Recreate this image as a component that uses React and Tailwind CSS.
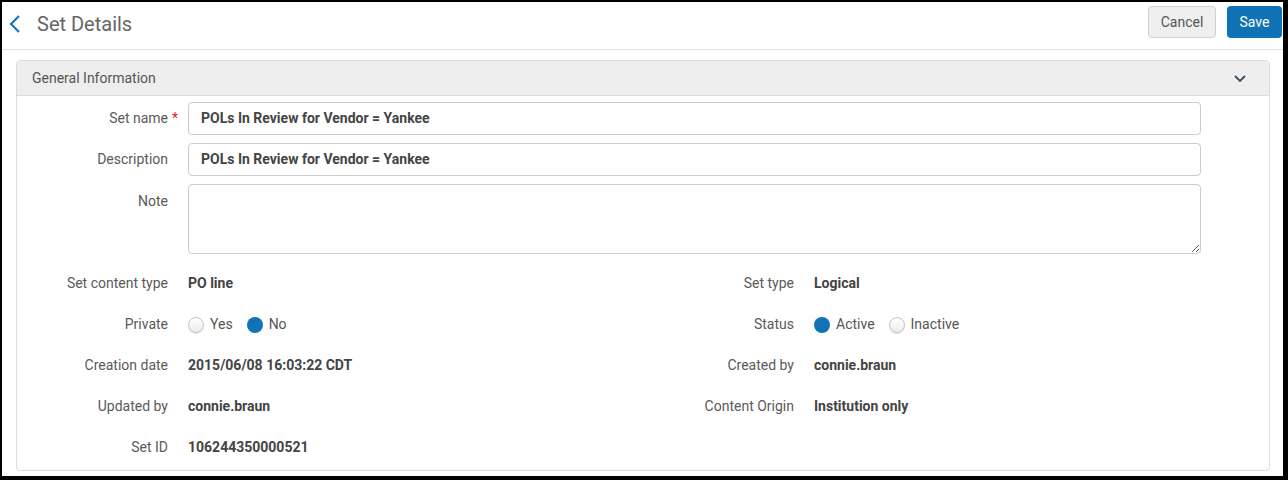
import React from "react";

function Radio({ checked, label }) {
  return (
    <div className="flex items-center">
      {checked ? (
        <span className="w-4 h-4 rounded-full bg-[#1272b6] inline-block" />
      ) : (
        <span className="w-4 h-4 rounded-full border border-[#c4c4c4] bg-gradient-to-b from-[#ffffff] to-[#ececec] shadow-[0_1px_1px_rgba(0,0,0,0.12)] inline-block" />
      )}
      <span className="ml-[6px] text-[14px] font-normal text-[#555]">{label}</span>
    </div>
  );
}

function Field({ label, children }) {
  return (
    <div className="flex items-center h-[41px]">
      <div className="w-[151px] text-right text-[14px] text-[#5a5a5a] shrink-0">{label}</div>
      <div className="ml-[20px] flex items-center gap-[14px] text-[14px] font-bold text-[#444]">{children}</div>
    </div>
  );
}

export default function App() {
  return (
    <div
      className="w-[1288px] h-[480px] bg-black pl-[2px] pt-[2px] pr-[5px] pb-[4px]"
      style={{ fontFamily: "Roboto, 'Liberation Sans', sans-serif" }}
    >
      <div className="w-full h-full bg-white flex flex-col">
        {/* Header */}
        <div className="h-[48px] border-b border-[#e3e3e3] flex items-start shrink-0">
          <div className="flex items-center h-[40px] pt-[4px]">
            <svg className="ml-[6px]" width="14" height="20" viewBox="0 0 14 20">
              <polyline points="11,2 3,10 11,18" fill="none" stroke="#1a74ba" strokeWidth="2.2" />
            </svg>
            <span className="ml-[15px] text-[20px] text-[#666]">Set Details</span>
          </div>
          <div className="ml-auto flex items-center gap-[11px] mt-[4px] mr-[1px]">
            <button className="h-[32px] w-[68px] rounded-[4px] border border-[#cfcfcf] bg-[#efefef] text-[14px] text-[#555]">
              Cancel
            </button>
            <button className="h-[32px] w-[55px] rounded-[4px] bg-[#0f72b5] text-[14px] text-white">
              Save
            </button>
          </div>
        </div>

        {/* Panel */}
        <div className="mx-[14px] mt-[10px] mr-[13px] border border-[#dcdcdc] rounded-[4px] flex-1 mb-[5px] flex flex-col">
          <div className="h-[35px] bg-[#eeeeee] border-b border-[#dcdcdc] rounded-t-[4px] flex items-center px-[15px]">
            <span className="text-[14px] text-[#555]">General Information</span>
            <svg className="ml-auto mr-[7px]" width="14" height="9" viewBox="0 0 14 9">
              <polyline points="2,2 7,7 12,2" fill="none" stroke="#3d4b5c" strokeWidth="1.8" />
            </svg>
          </div>

          <div className="pt-[6px] pr-[68px]">
            <div className="flex items-center h-[33px]">
              <div className="w-[151px] text-right text-[14px] text-[#5a5a5a] shrink-0 relative">
                Set name
                <span className="absolute left-full ml-[4px] text-[#e0201a]">*</span>
              </div>
              <div className="ml-[20px] flex-1 h-[33px] border border-[#cdcdcd] rounded-[4px] flex items-center px-[12px] text-[14px] font-bold text-[#444]">
                POLs In Review for Vendor = Yankee
              </div>
            </div>
            <div className="flex items-center h-[33px] mt-[8px]">
              <div className="w-[151px] text-right text-[14px] text-[#5a5a5a] shrink-0">Description</div>
              <div className="ml-[20px] flex-1 h-[33px] border border-[#cdcdcd] rounded-[4px] flex items-center px-[12px] text-[14px] font-bold text-[#444]">
                POLs In Review for Vendor = Yankee
              </div>
            </div>
            <div className="flex items-start mt-[8px]">
              <div className="w-[151px] text-right text-[14px] text-[#5a5a5a] shrink-0 pt-[7px]">Note</div>
              <textarea className="ml-[20px] flex-1 h-[70px] border border-[#cdcdcd] rounded-[4px] outline-none" />
            </div>
          </div>

          <div className="grid grid-cols-2 mt-[9px]">
            <div className="flex flex-col">
              <Field label="Set content type">PO line</Field>
              <Field label="Private">
                <Radio label="Yes" />
                <Radio checked label="No" />
              </Field>
              <Field label="Creation date">2015/06/08 16:03:22 CDT</Field>
              <Field label="Updated by">connie.braun</Field>
              <Field label="Set ID">106244350000521</Field>
            </div>
            <div className="flex flex-col">
              <Field label="Set type">Logical</Field>
              <Field label="Status">
                <Radio checked label="Active" />
                <Radio label="Inactive" />
              </Field>
              <Field label="Created by">connie.braun</Field>
              <Field label="Content Origin">Institution only</Field>
            </div>
          </div>
        </div>
      </div>
    </div>
  );
}
